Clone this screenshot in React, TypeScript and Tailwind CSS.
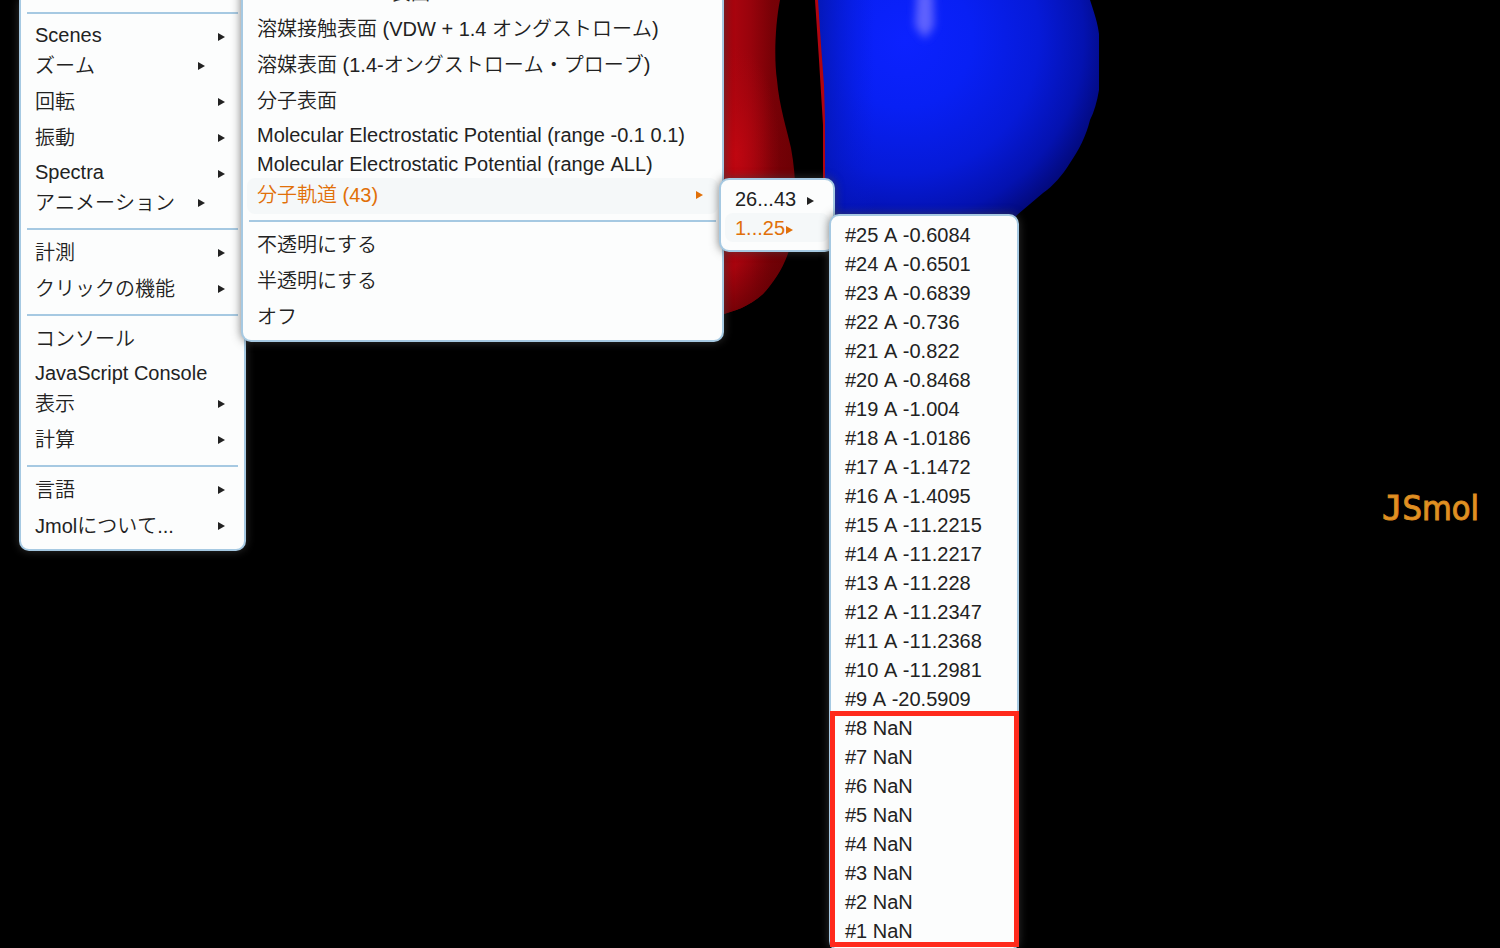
import React from "react";

type Entry = { label: string; arrow?: "edge" | "inset" | "near" | "tight"; active?: boolean } | "line";

const cjk = /[\u3040-\u30ff\u4e00-\u9fff]/;

function Arrow({ className }: { className: string }) {
  return (
    <svg className={`h-2 w-[7px] shrink-0 fill-current ${className}`} viewBox="0 0 7 8" aria-hidden="true">
      <path d="M0 0L7 4L0 8Z" />
    </svg>
  );
}

const arrowClass = {
  edge: "ml-auto mr-[5px]",
  inset: "ml-auto mr-[25px]",
  near: "ml-[11px]",
  tight: "ml-px",
};

function Row({ entry }: { entry: Entry }) {
  if (entry === "line") return <li role="separator" className="mx-0.5 my-1.5 h-0.5 bg-[#a6c9e2]" />;
  const tall = cjk.test(entry.label);
  return (
    <li>
      <button
        type="button"
        role="menuitem"
        aria-haspopup={entry.arrow ? "menu" : undefined}
        className={`flex w-full items-center whitespace-nowrap rounded-lg px-2.5 text-left ${
          tall ? "h-9 pb-0.5" : "h-[29px] pt-px"
        } ${entry.active ? "bg-[#f5f8f9] text-[#e17009]" : "text-[#222222]"}`}
      >
        {entry.label}
        {entry.arrow && <Arrow className={`${arrowClass[entry.arrow]} ${tall ? "" : "mt-1"}`} />}
      </button>
    </li>
  );
}

function Menu({ label, entries, className }: { label: string; entries: Entry[]; className: string }) {
  return (
    <ul
      role="menu"
      aria-label={label}
      className={`shrink-0 border-2 border-[#a6c9e2] bg-[#fcfdfd] px-1 pb-1 shadow-[0_0_10px_rgba(70,70,70,0.7)] ${className}`}
    >
      {entries.map((entry, i) => (
        <Row key={i} entry={entry} />
      ))}
    </ul>
  );
}

const mainEntries: Entry[] = [
  "line",
  { label: "Scenes", arrow: "edge" },
  { label: "ズーム", arrow: "inset" },
  { label: "回転", arrow: "edge" },
  { label: "振動", arrow: "edge" },
  { label: "Spectra", arrow: "edge" },
  { label: "アニメーション", arrow: "inset" },
  "line",
  { label: "計測", arrow: "edge" },
  { label: "クリックの機能", arrow: "edge" },
  "line",
  { label: "コンソール" },
  { label: "JavaScript Console" },
  { label: "表示", arrow: "edge" },
  { label: "計算", arrow: "edge" },
  "line",
  { label: "言語", arrow: "edge" },
  { label: "Jmolについて...", arrow: "edge" },
];

const surfaceEntries: Entry[] = [
  { label: "van der Waals 表面" },
  { label: "溶媒接触表面 (VDW + 1.4 オングストローム)" },
  { label: "溶媒表面 (1.4-オングストローム・プローブ)" },
  { label: "分子表面" },
  { label: "Molecular Electrostatic Potential (range -0.1 0.1)" },
  { label: "Molecular Electrostatic Potential (range ALL)" },
  { label: "分子軌道 (43)", arrow: "edge", active: true },
  "line",
  { label: "不透明にする" },
  { label: "半透明にする" },
  { label: "オフ" },
];

const rangeEntries: Entry[] = [
  { label: "26...43", arrow: "near" },
  { label: "1...25", arrow: "tight", active: true },
];

const orbitalEntries: Entry[] = [
  "#25 A -0.6084",
  "#24 A -0.6501",
  "#23 A -0.6839",
  "#22 A -0.736",
  "#21 A -0.822",
  "#20 A -0.8468",
  "#19 A -1.004",
  "#18 A -1.0186",
  "#17 A -1.1472",
  "#16 A -1.4095",
  "#15 A -11.2215",
  "#14 A -11.2217",
  "#13 A -11.228",
  "#12 A -11.2347",
  "#11 A -11.2368",
  "#10 A -11.2981",
  "#9 A -20.5909",
  "#8 NaN",
  "#7 NaN",
  "#6 NaN",
  "#5 NaN",
  "#4 NaN",
  "#3 NaN",
  "#2 NaN",
  "#1 NaN",
].map((label) => ({ label }));

const redLobe =
  "M700 0H780C775 25 774 60 777 80C779 105 787 130 791 148C796 175 797 205 793 235C788 262 775 281 763 294C748 307 735 311 720 315H700Z";
const blueLobe =
  "M817 0H1090C1094 12 1098 24 1099 34V90C1097 102 1094 112 1090 120C1086 136 1079 150 1070 163C1062 176 1053 186 1043 193L1017 215L1000 240H825C826 160 824 70 817 0Z";

function Orbital() {
  return (
    <svg className="absolute left-[700px] top-0 h-[340px] w-[420px]" viewBox="700 0 420 340" aria-hidden="true">
      <defs>
        <linearGradient id="red" x1="720" x2="796" y1="0" y2="0" gradientUnits="userSpaceOnUse">
          <stop offset="0" stopColor="#92030b" />
          <stop offset=".18" stopColor="#a9040e" />
          <stop offset=".4" stopColor="#98030c" />
          <stop offset=".68" stopColor="#780107" />
          <stop offset="1" stopColor="#6c0004" />
        </linearGradient>
        <radialGradient
          id="glow"
          cx="0"
          cy="0"
          r="1"
          gradientUnits="userSpaceOnUse"
          gradientTransform="translate(736 155) scale(44 110)"
        >
          <stop offset="0" stopColor="#c40711" stopOpacity=".85" />
          <stop offset="1" stopColor="#b00610" stopOpacity="0" />
        </radialGradient>
        <linearGradient id="base" x1="745" x2="768" y1="260" y2="300" gradientUnits="userSpaceOnUse">
          <stop offset="0" stopColor="#600004" stopOpacity="0" />
          <stop offset="1" stopColor="#600004" stopOpacity=".8" />
        </linearGradient>
        <radialGradient
          id="blue"
          cx="0"
          cy="0"
          r="1"
          gradientUnits="userSpaceOnUse"
          gradientTransform="translate(905 40) rotate(40) scale(222 225)"
        >
          <stop offset="0" stopColor="#0c22ff" />
          <stop offset=".3" stopColor="#0820f4" />
          <stop offset=".6" stopColor="#061ad8" />
          <stop offset=".8" stopColor="#0412b0" />
          <stop offset="1" stopColor="#020560" />
        </radialGradient>
        <linearGradient id="edge" x1="820" x2="875" y1="0" y2="0" gradientUnits="userSpaceOnUse">
          <stop offset="0" stopColor="#0417b0" stopOpacity=".8" />
          <stop offset="1" stopColor="#0619d6" stopOpacity="0" />
        </linearGradient>
        <filter id="soft" x="-1" y="-1" width="3" height="3">
          <feGaussianBlur stdDeviation="4" />
        </filter>
      </defs>
      <path d={redLobe} fill="url(#red)" />
      <path d={redLobe} fill="url(#glow)" />
      <path d={redLobe} fill="url(#base)" />
      <path d={blueLobe} fill="url(#blue)" />
      <path d="M817 0H875V240H825C826 160 824 70 817 0Z" fill="url(#edge)" />
      <path d="M917 -8H933L934 26L925 39L915 26Z" fill="#7c78ff" opacity=".75" filter="url(#soft)" />
      <path d="M815 0H818L821 45L824 85L825 120V240H823V125L819 60Z" fill="#b00510" />
    </svg>
  );
}

export default function App() {
  return (
    <main className="relative h-screen overflow-hidden bg-black font-['Liberation_Sans','Noto_Sans_CJK_JP',sans-serif] text-[20px] font-[350] leading-6 [font-kerning:none]">
      <Orbital />
      <p className="absolute right-[21px] top-[488px] font-['DejaVu_Sans_Condensed','DejaVu_Sans',sans-serif] text-[34px] leading-10 text-[#e39122] [-webkit-text-stroke:1px_#d98a20]">
        <span className="font-['DejaVu_Sans_Mono']">J</span>Smol
      </p>
      <div className="relative flex items-start pl-[19px]">
        <Menu label="Jmol" entries={mainEntries} className="w-[227px] rounded-b-[10px] border-t-0 pt-1.5" />
        <Menu label="表面" entries={surfaceEntries} className="-ml-[5px] -mt-6 w-[483px] rounded-b-[10px] border-t-0" />
        <Menu label="分子軌道" entries={rangeEntries} className="-ml-[5px] mt-[178px] w-[116px] rounded-[10px] pb-2 pt-1" />
        <div className="relative -ml-1.5 mt-[214px] shrink-0">
          <Menu label="1...25" entries={orbitalEntries} className="w-[190px] rounded-[10px] pt-1" />
          <div className="absolute bottom-1 left-px right-0 h-[236px] border-[5px] border-[#ff2a1c]" aria-hidden="true" />
        </div>
      </div>
    </main>
  );
}
